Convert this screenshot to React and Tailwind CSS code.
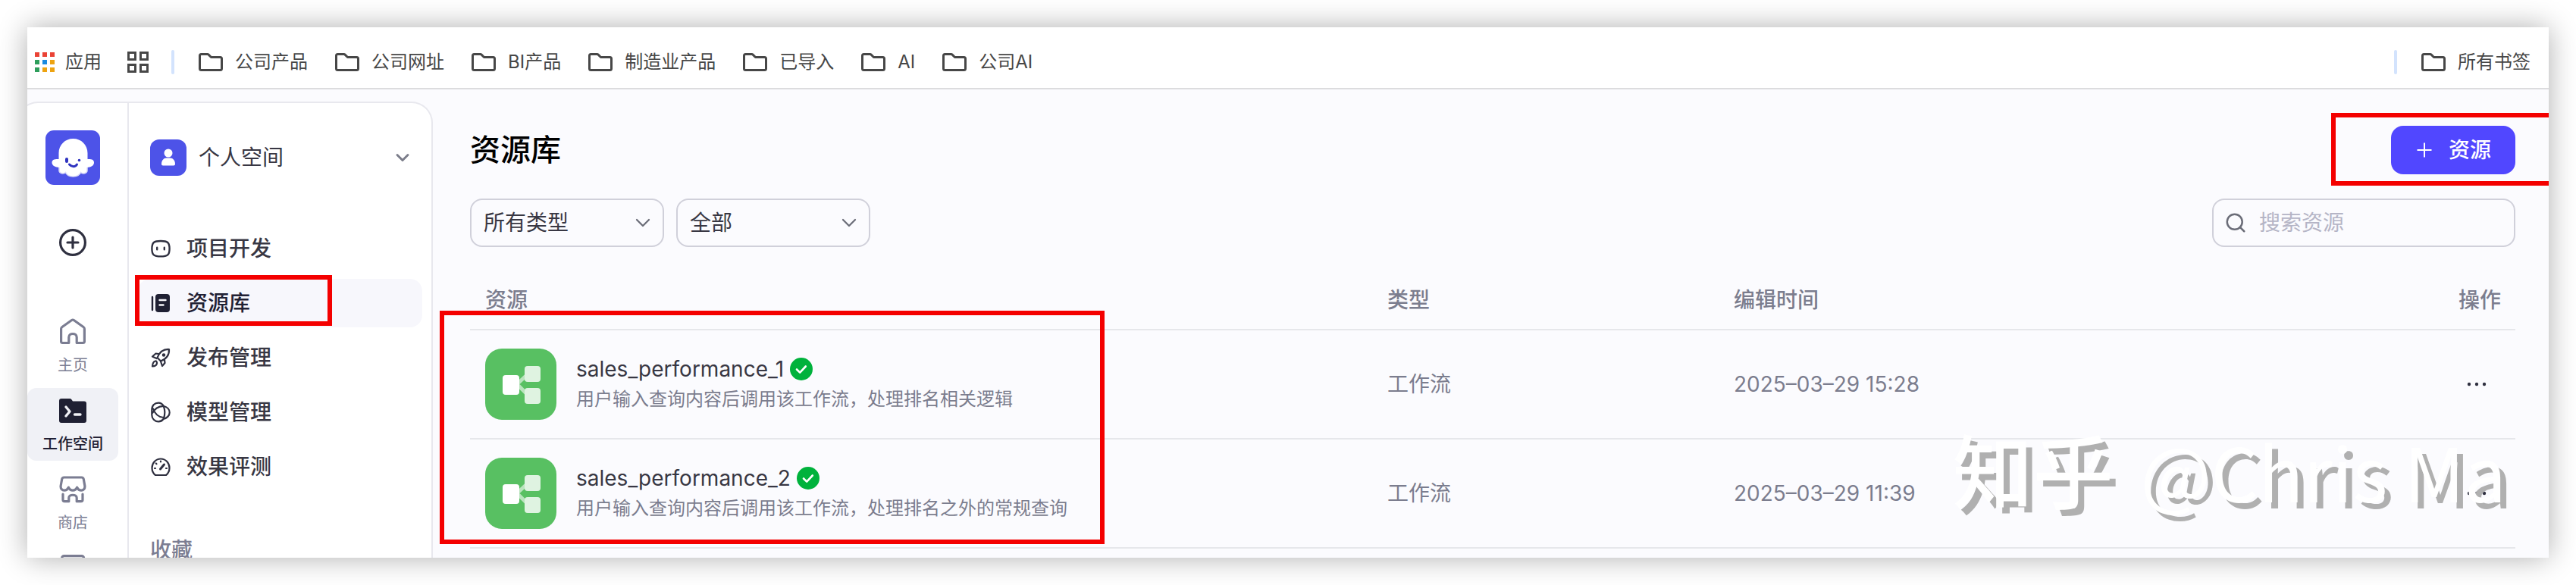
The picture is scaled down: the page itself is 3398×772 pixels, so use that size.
import React, { useState } from 'react';
import { Search, ChevronDown } from 'lucide-react';

const bookmarks = ['公司产品', '公司网址', 'BI产品', '制造业产品', '已导入', 'AI', '公司AI'];

const resources = [
    {
        name: 'sales_performance_1',
        description: '用户输入查询内容后调用该工作流，处理排名相关逻辑',
        type: '工作流',
        editedAt: '2025–03–29 15:28',
    },
    {
        name: 'sales_performance_2',
        description: '用户输入查询内容后调用该工作流，处理排名之外的常规查询',
        type: '工作流',
        editedAt: '2025–03–29 11:39',
    },
];

/* ---------- Icons ---------- */

const AppsIcon = () => {
    const colors = ['#ea4335', '#ea4335', '#ea4335', '#2e9e5b', '#1a8ae0', '#eda311', '#2e9e5b', '#eda311', '#eda311'];
    return (
        <svg width="26" height="26" viewBox="0 0 26 26" aria-hidden="true">
            {colors.map((color, i) => (
                <rect key={i} x={(i % 3) * 10} y={Math.floor(i / 3) * 10} width="6" height="6" fill={color} />
            ))}
        </svg>
    );
};

const GridIcon = () => (
    <svg width="28" height="28" viewBox="0 0 28 28" fill="none" stroke="#474747" strokeWidth="3" aria-hidden="true">
        <rect x="1.5" y="1.5" width="9" height="9" />
        <rect x="17.5" y="1.5" width="9" height="9" />
        <rect x="1.5" y="17.5" width="9" height="9" />
        <rect x="17.5" y="17.5" width="9" height="9" />
    </svg>
);

const FolderIcon = () => (
    <svg width="32" height="24" viewBox="0 0 32 24" fill="none" stroke="#474747" strokeWidth="3" strokeLinejoin="round" aria-hidden="true">
        <path d="M3.5 1.5h8.2c.6 0 1 .2 1.4.6L16.5 5.5H28.5c1.2 0 2 .8 2 2V20.5c0 1.2-.8 2-2 2h-25c-1.2 0-2-.8-2-2V3.5c0-1.2.8-2 2-2z" />
    </svg>
);

const LogoIcon = () => (
    <svg width="72" height="72" viewBox="0 0 72 72" aria-hidden="true">
        <rect width="72" height="72" rx="11" fill="#4d53e8" />
        <path
            d="M17.5 38V30C17.5 19 26 11 36.5 11S55.5 19 55.5 30v8c4 0 8.5 0 8.5 4.5s-4.5 6-9 6.5v4c0 4-6 5-8.5 2.5-1.5 3.5-5 5.5-10 5.5s-8.5-2-10-5.5C24 58 18 57 18 53v-4c-4.5-.5-9.5-2-9.5-6.5S13.5 38 17.5 38z"
            fill="#fff"
        />
        <path d="M18 49v4c0 4 6 5 8.5 2.5 1.5 3.5 5 5.5 10 5.5s8.5-2 10-5.5C49 58 55 57 55 53v-4" fill="none" stroke="#dcdcf8" strokeWidth="1.5" />
        <rect x="26" y="36" width="4" height="7" rx="2" fill="#2f33c0" />
        <circle cx="44.5" cy="39.5" r="1.8" fill="#2f33c0" />
        <path d="M31.5 45c3 3.5 8 3.5 10 0" fill="none" stroke="#2f33c0" strokeWidth="3" strokeLinecap="round" />
    </svg>
);

const AddIcon = () => (
    <svg width="36" height="36" viewBox="0 0 36 36" fill="none" stroke="#2f3040" strokeWidth="3.2" strokeLinecap="round" aria-hidden="true">
        <circle cx="18" cy="18" r="16.4" />
        <path d="M18 11v14M11 18h14" />
    </svg>
);

const HomeIcon = () => (
    <svg width="36" height="36" viewBox="0 0 36 36" fill="none" stroke="#7b7d92" strokeWidth="3.2" strokeLinejoin="round" aria-hidden="true">
        <path d="M16.6 2.5 4 11.5C3 12.2 2.6 13 2.6 14v16.5c0 1.3.8 2 2 2h8.2v-7.5c0-6 10.4-6 10.4 0v7.5h8.2c1.2 0 2-.7 2-2V14c0-1-.4-1.8-1.4-2.5L19.4 2.5c-1-.7-1.8-.7-2.8 0z" />
    </svg>
);

const WorkspaceIcon = () => (
    <svg width="36" height="36" viewBox="0 0 36 36" fill="none" aria-hidden="true">
        <path d="M3 2h11c1 0 1.8.4 2.4 1.2L18 5.5h15c2 0 3 1 3 3V31c0 2-1 3-3 3H3c-2 0-3-1-3-3V5c0-2 1-3 3-3z" fill="#1f2033" />
        <path d="m9 13 5 6-5 6M20.5 23h7.5" stroke="#f0f1f6" strokeWidth="3.4" strokeLinecap="round" strokeLinejoin="round" />
    </svg>
);

const StoreIcon = () => (
    <svg width="36" height="36" viewBox="0 0 36 36" fill="none" stroke="#7b7d92" strokeWidth="3.2" strokeLinejoin="round" strokeLinecap="round" aria-hidden="true">
        <path d="M6.5 2h23c1.5 0 2.5.8 2.8 2.3l1.5 8.5c.7 4-1.8 6.4-4.6 6.4-2.6 0-4.4-1.6-5.6-4-1 2.4-3 4-5.6 4s-4.6-1.6-5.6-4c-1.2 2.4-3 4-5.6 4-2.8 0-5.3-2.4-4.6-6.4l1.5-8.5C4 2.8 5 2 6.5 2z" />
        <path d="M5 24v7.5c0 1.4.8 2.2 2.2 2.2h5.6V29c0-5 10.4-5 10.4 0v4.7h5.6c1.4 0 2.2-.8 2.2-2.2V24" />
    </svg>
);

const TemplateIcon = () => (
    <svg width="36" height="36" viewBox="0 0 36 36" fill="none" stroke="#7b7d92" strokeWidth="3.2" aria-hidden="true">
        <rect x="3.6" y="1.6" width="29" height="29" rx="3" />
    </svg>
);

const PersonIcon = () => (
    <svg width="48" height="48" viewBox="0 0 48 48" aria-hidden="true">
        <rect width="48" height="48" rx="12" fill="#4d53e8" />
        <circle cx="24" cy="18" r="5.5" fill="#fff" />
        <path d="M15 32.5c0-5 3-8 6.5-8h5c3.5 0 6.5 3 6.5 8 0 1.2-.8 2-2 2h-14c-1.2 0-2-.8-2-2z" fill="#fff" />
    </svg>
);

const BotIcon = () => (
    <svg width="28" height="28" viewBox="0 0 28 28" fill="none" stroke="#2f3040" strokeWidth="2.4" strokeLinecap="round" aria-hidden="true">
        <path d="M14 4c9 0 11.6 2 11.6 10.2S23 24.4 14 24.4 2.4 22.4 2.4 14.2 5 4 14 4z" />
        <path d="M9.2 12.8v2.4M18.8 12.8v2.4" />
    </svg>
);

const LibraryIcon = () => (
    <svg width="28" height="28" viewBox="0 0 28 28" fill="none" aria-hidden="true">
        <rect x="7" y="2" width="19" height="24" rx="4" fill="#1f2033" />
        <path d="M3 6v17" stroke="#1f2033" strokeWidth="2.4" strokeLinecap="round" />
        <path d="M12.5 10h8M12.5 16.5h5" stroke="#f5f5fa" strokeWidth="2.4" strokeLinecap="round" />
    </svg>
);

const RocketIcon = () => (
    <svg width="28" height="28" viewBox="0 0 28 28" fill="none" stroke="#2f3040" strokeWidth="2.2" strokeLinejoin="round" strokeLinecap="round" aria-hidden="true">
        <path d="M25 3c-8-.5-12.5 3.5-15.5 11l4.5 4.5C21.5 15.5 25.5 11 25 3z" />
        <path d="m11 9-3.5-.5-4.5 4 5.5 2.5M19 17l.5 4-3.5 4-2-6" />
        <path d="M7 18.5C4.5 19 3.3 21 3 25.5c4-.2 5.5-1.5 6-4 .2-2-1-3.2-2-3z" />
        <circle cx="18" cy="10.5" r="1.2" />
    </svg>
);

const ModelIcon = () => (
    <svg width="28" height="28" viewBox="0 0 28 28" fill="none" stroke="#2f3040" strokeWidth="2.2" strokeLinejoin="round" aria-hidden="true">
        <path d="M2.3 11C2.3 5 6 1.6 11 1.6c3 0 5.4 1.6 6.7 4.2C22.5 7 25.7 10.5 25.7 14.5S22 22 17.5 23c-1.5 2-4 3.4-6.5 3.4-5 0-8.7-4-8.7-9z" />
        <path d="M2.8 15.5C5.5 10 10.5 6 17.7 5.8M17.7 5.8c1.8 4.5 2.3 11 0 17M17.5 21C11.5 20.5 6.5 17 3.5 8.5" />
    </svg>
);

const GaugeIcon = () => (
    <svg width="28" height="28" viewBox="0 0 28 28" fill="none" stroke="#2f3040" strokeWidth="2.2" strokeLinecap="round" strokeLinejoin="round" aria-hidden="true">
        <path d="M7 25C4.3 23 2.5 19.5 2.5 15.5 2.5 9 7.5 3.5 14 3.5S25.5 9 25.5 15.5c0 4-1.8 7.5-4.5 9.5z" />
        <path d="m13.5 17 5-6" strokeWidth="3" />
        <path d="M14 6.5v1M7.8 9.5l.7.7M6 16h1M21 16h1" />
    </svg>
);

const WorkflowIcon = () => (
    <svg width="94" height="94" viewBox="0 0 94 94" className="shrink-0" aria-hidden="true">
        <rect width="94" height="94" rx="22" fill="#58c062" />
        <path d="M42 47 58 32M42 47l16 16" stroke="#b9e4bd" strokeWidth="5" />
        <rect x="52" y="23" width="21" height="21" rx="4" fill="#dff3e1" />
        <rect x="52" y="52" width="21" height="21" rx="4" fill="#dff3e1" />
        <rect x="23" y="35" width="22" height="26" rx="4" fill="#fff" />
    </svg>
);

const PublishedIcon = () => (
    <svg width="30" height="30" viewBox="0 0 30 30" fill="none" role="img" aria-label="已发布">
        <circle cx="15" cy="15" r="15" fill="#00b23c" />
        <path d="m9 15.5 4.2 4.2 7.6-8.2" stroke="#fff" strokeWidth="2.6" strokeLinecap="round" strokeLinejoin="round" />
    </svg>
);

const MoreIcon = () => (
    <svg width="28" height="28" viewBox="0 0 28 28" fill="#2f3040" aria-hidden="true">
        <circle cx="4" cy="14" r="2.2" />
        <circle cx="14" cy="14" r="2.2" />
        <circle cx="24" cy="14" r="2.2" />
    </svg>
);

/* ---------- Sections ---------- */

const BookmarkLink = ({ label }) => (
    <a href="#" className="flex items-center gap-4">
        <FolderIcon />
        {label}
    </a>
);

const BookmarkBar = () => (
    <div className="flex h-[82px] items-center border-b-2 border-[#dcdcde] bg-white pt-3 pr-6 pl-[10px] text-2xl text-[#474747]">
        <a href="#" className="flex items-center gap-[14px]">
            <AppsIcon />
            应用
        </a>
        <a href="#" aria-label="标签页组" className="ml-[34px]">
            <GridIcon />
        </a>
        <div className="mr-8 ml-[30px] h-8 w-1 rounded bg-[#d3e3fd]" />
        <nav className="flex items-center gap-9">
            {bookmarks.map((label) => (
                <BookmarkLink key={label} label={label} />
            ))}
        </nav>
        <div className="mr-8 ml-auto h-8 w-1 rounded bg-[#d3e3fd]" />
        <BookmarkLink label="所有书签" />
    </div>
);

const railItems = [
    { label: '主页', icon: HomeIcon },
    { label: '工作空间', icon: WorkspaceIcon, active: true },
    { label: '商店', icon: StoreIcon },
];

const Rail = () => (
    <nav className="flex w-[146px] shrink-0 flex-col items-center border-r-2 border-[#e8e8ee] pt-9">
        <a href="#" aria-label="扣子">
            <LogoIcon />
        </a>
        <button type="button" aria-label="创建" className="mt-[58px]">
            <AddIcon />
        </button>
        <div className="mt-[46px] mb-6 h-[2px] w-12 bg-[#ebebf0]" />
        <div className="flex flex-col gap-2">
            {railItems.map(({ label, icon: Icon, active }) => (
                <a
                    key={label}
                    href="#"
                    className={`flex h-24 w-[120px] flex-col items-center gap-[14px] rounded-xl pt-3 text-xl leading-6 ${
                        active ? 'bg-[#f0f1f6] font-medium text-[#1f2033]' : 'text-[#7b7d92]'
                    }`}
                >
                    <Icon />
                    {label}
                </a>
            ))}
            <a href="#" aria-label="模板" className="flex justify-center pt-3">
                <TemplateIcon />
            </a>
        </div>
    </nav>
);

const menuItems = [
    { label: '项目开发', icon: BotIcon },
    { label: '资源库', icon: LibraryIcon, active: true },
    { label: '发布管理', icon: RocketIcon },
    { label: '模型管理', icon: ModelIcon },
    { label: '效果评测', icon: GaugeIcon },
];

const SpaceMenu = () => (
    <div className="min-w-0 flex-1 px-3 pt-12">
        <button type="button" className="flex w-full items-center gap-4 px-4 text-[28px] leading-[48px] text-[#383743]">
            <PersonIcon />
            个人空间
            <ChevronDown size={28} strokeWidth={2.5} className="-mr-1 ml-auto text-[#7b7d8a]" />
        </button>
        <nav className="mt-16 flex flex-col gap-2">
            {menuItems.map(({ label, icon: Icon, active }) => (
                <a
                    key={label}
                    href="#"
                    className={`relative flex h-16 items-center gap-5 rounded-2xl px-4 text-[28px] font-medium ${
                        active ? 'bg-[#f7f7fc] text-[#1f2033]' : 'text-[#383743]'
                    }`}
                >
                    <Icon />
                    {label}
                    {active && <span className="absolute -top-[5px] -left-1 h-[67px] w-[260px] border-[6px] border-[#f40000]" />}
                </a>
            ))}
        </nav>
        <h2 className="mt-[58px] px-4 text-[28px] leading-10 font-medium text-[#7b7d92]">收藏</h2>
    </div>
);

const FilterSelect = ({ label, options }) => (
    <div className="relative w-64">
        <select
            aria-label={label}
            className="block h-16 w-full appearance-none rounded-2xl border-2 border-[#d0d0da] bg-transparent px-4 text-[28px] text-[#383743]"
        >
            {options.map((option) => (
                <option key={option}>{option}</option>
            ))}
        </select>
        <ChevronDown size={32} strokeWidth={1.7} className="pointer-events-none absolute top-4 right-3 text-[#6b6d78]" />
    </div>
);

const ResourceTable = () => (
    <table className="mt-10 w-full table-fixed border-collapse text-left text-[28px] text-[#7b7d8e]">
        <thead>
            <tr className="h-[69px] border-b-2 border-[#e6e7eb]">
                <th className="px-5 pb-2 font-medium">资源</th>
                <th className="w-[457px] px-5 pb-2 font-medium">类型</th>
                <th className="w-[956px] px-5 pb-2 font-medium">编辑时间</th>
                <th className="w-[95px] pb-2 pl-5 font-medium">操作</th>
            </tr>
        </thead>
        <tbody>
            {resources.map((item) => (
                <tr key={item.name} className="h-36 border-b-2 border-[#e6e7eb]">
                    <td className="px-5">
                        <div className="flex items-center gap-[26px]">
                            <WorkflowIcon />
                            <div>
                                <div className="flex items-center gap-2 leading-9 text-[#383743]">
                                    {item.name}
                                    <PublishedIcon />
                                </div>
                                <div className="mt-1 text-2xl leading-9">{item.description}</div>
                            </div>
                        </div>
                    </td>
                    <td className="px-5">{item.type}</td>
                    <td className="px-5">{item.editedAt}</td>
                    <td className="pl-[30px]">
                        <button type="button" aria-label="更多操作" className="block">
                            <MoreIcon />
                        </button>
                    </td>
                </tr>
            ))}
        </tbody>
    </table>
);

const App = () => {
    const [keyword, setKeyword] = useState('');

    return (
        <div className="bg-white p-9 font-['Inter','Noto_Sans_CJK_SC',sans-serif]">
            <div className="relative h-[700px] overflow-hidden shadow-[0_0_36px_rgba(0,0,0,0.32)]">
                <div className="flex h-full flex-col bg-[#fbfbfe]">
                    <BookmarkBar />
                    <div className="flex min-h-0 flex-1">
                        <aside className="mt-4 -ml-[14px] flex w-[549px] shrink-0 rounded-t-[28px] border-2 border-b-0 border-[#e8e8ee] bg-white">
                            <Rail />
                            <SpaceMenu />
                        </aside>
                        <main className="relative min-w-0 flex-1 pt-12 pr-11 pl-[49px]">
                            <div className="flex h-16 items-center justify-between">
                                <h1 className="text-[40px] font-medium text-black">资源库</h1>
                                <button
                                    type="button"
                                    className="flex h-16 items-center gap-5 rounded-2xl bg-[#5147ff] px-8 text-[28px] font-medium text-white"
                                >
                                    <svg width="24" height="24" viewBox="0 0 24 24" stroke="#fff" strokeWidth="2" aria-hidden="true">
                                        <path d="M12 2.5v19M2.5 12h19" />
                                    </svg>
                                    资源
                                </button>
                            </div>
                            <div className="mt-8 flex items-center gap-4">
                                <FilterSelect label="资源类型" options={['所有类型', '工作流', '插件', '知识库']} />
                                <FilterSelect label="创建者" options={['全部', '由我创建']} />
                                <label className="ml-auto flex h-16 w-[400px] items-center gap-4 rounded-2xl border-2 border-[#d0d0da] px-[14px]">
                                    <Search size={30} strokeWidth={2} className="shrink-0 text-[#6b6d78]" />
                                    <input
                                        type="text"
                                        aria-label="搜索资源"
                                        placeholder="搜索资源"
                                        value={keyword}
                                        onChange={(e) => setKeyword(e.target.value)}
                                        className="min-w-0 flex-1 bg-transparent text-[28px] outline-none placeholder:text-[#b5b5c6]"
                                    />
                                </label>
                            </div>
                            <ResourceTable />

                            {/* Highlight frames */}
                            <div className="pointer-events-none absolute top-[31px] right-0 h-24 w-[287px] border-6 border-r-0 border-[#f40000]" />
                            <div className="pointer-events-none absolute top-[292px] left-[9px] h-[308px] w-[877px] border-6 border-[#f40000]" />
                        </main>
                    </div>
                </div>
                <div className="pointer-events-none absolute right-14 bottom-14 flex items-baseline gap-9 font-['Noto_Sans_CJK_SC',sans-serif] text-[98px] leading-[120px] whitespace-nowrap text-white [text-shadow:8px_8px_0_#b0b0b0]">
                    <span className="text-[106px] font-medium">知乎</span>
                    <span>@Chris Ma</span>
                </div>
            </div>
        </div>
    );
};

export default App;
